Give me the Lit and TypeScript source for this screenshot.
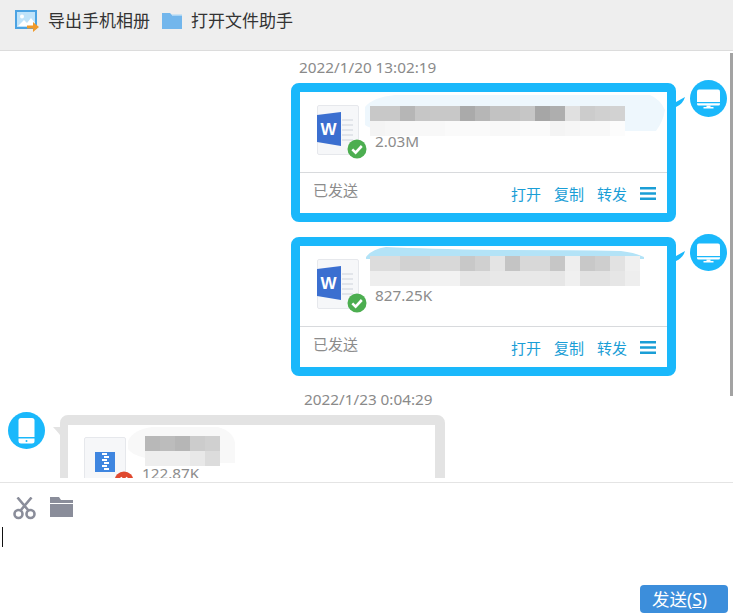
import { LitElement, html, css, svg, nothing } from "lit";
import { customElement } from "lit/decorators.js";

const wordIcon = svg`<svg class="doc" viewBox="0 0 42 50" width="42" height="50">
  <rect x=".5" y=".5" width="41" height="49" rx="1.5" fill="#f6f7f9" stroke="#e6e8ec"/>
  <path d="M25 15h11M25 20h11M25 25h11M25 30h11M25 35h11" stroke="#e2e5ea" stroke-width="2"/>
  <path d="M0 10 24 7v34L0 37z" fill="#3b6fd0"/>
  <text x="11.500" y="30" font-family="Liberation Sans, sans-serif" font-weight="700" font-size="17" fill="#fff" text-anchor="middle">W</text>
</svg>`;
const zipIcon = svg`<svg class="doc" viewBox="0 0 42 50" width="42" height="50">
  <rect x=".5" y=".5" width="41" height="60" rx="1.500" fill="#f6f7f9" stroke="#e6e8ec"/>
  <rect x="11" y="15" width="20" height="20" fill="#3f86e0"/>
  <path d="M18 16h5v2h-5zM20 19h5v2h-5zM18 22h5v2h-5zM20 25h5v2h-5zM18 28h5v2h-5zM20 31h5v2h-5z" fill="#fff"/>
</svg>`;
const checkBadge = svg`<svg class="badge" viewBox="0 0 20 20" width="20" height="20">
  <circle cx="10" cy="10" r="9.500" fill="#4cae50"/>
  <path d="M5.300 10.400 8.600 13.600 14.800 7" fill="none" stroke="#fff" stroke-width="2.600"/>
</svg>`;
const errorBadge = svg`<svg class="badge" viewBox="0 0 20 20" width="20" height="20">
  <circle cx="10" cy="10" r="9.500" fill="#e0492f"/>
  <path d="M6.500 6.500 13.500 13.500M13.500 6.500 6.500 13.500" stroke="#fff" stroke-width="2.400"/>
</svg>`;
const pcIcon = svg`<svg viewBox="0 0 37 37" width="37" height="37">
  <circle cx="18.500" cy="18.500" r="18.500" fill="#1ab8fb"/>
  <path d="M7 11.500q0-2 2-2h19q2 0 2 2V22H7z" fill="#fff"/>
  <path d="M7 23.300h23v.7q0 1.500-1.500 1.500h-20Q7 25.500 7 24z" fill="#fff"/>
  <path d="M16.500 25.500h4v1.500h3v1.500h-10V27h3z" fill="#fff"/>
</svg>`;
const phoneIcon = svg`<svg viewBox="0 0 37 37" width="37" height="37">
  <circle cx="18.500" cy="18.500" r="18.500" fill="#1ab8fb"/>
  <path d="M13 6h11q2.500 0 2.500 2.500V25h-16V8.500Q10.500 6 13 6z" fill="#fff"/>
  <path d="M10.500 26.500h16V29q0 2.500-2.500 2.500H13q-2.500 0-2.500-2.500z" fill="#fff"/>
  <circle cx="18.500" cy="29" r="1" fill="#1ab8fb"/>
</svg>`;

const m1 = [
  ["c8","c8","b6","c6","c8","c8","aa","b6","c2","c2","c6","a6","ae","e0","cc","d0","d2"],
  ["f4","f6","f8","f8","f8","fa","fa","fa","f8","f8","fa","fa","f4","f6","f8","f8","fc"],
];
const m2 = [
  ["dc","dc","d2","d2","d8","d8","c8","d0","e4","c4","d8","d8","c6","ee","c8","ce","e2","f0"],
  ["ee","ee","f0","f0","f2","f2","e6","e6","e8","e8","e8","e8","e6","f0","e2","e2","e6","ee"],
];
const m3 = [
  ["b8","bc","b6","cc","d0"],
  ["ee","ee","ee","e8","dc"],
];

function mosaic(rows: string[][], cls: string) {
  return html`<div class="mosaic ${cls}">
    ${rows.map(
      (r) => html`<div class="mrow">${r.map((c) => html`<i style="background:#${c}${c}${c}"></i>`)}</div>`
    )}
  </div>`;
}

@customElement("app-root")
export class AppRoot extends LitElement {
  static styles = css`
    :host {
      display: flex;
      flex-direction: column;
      width: 733px;
      height: 616px;
      overflow: hidden;
      background: #fff;
      font-family: "Noto Sans", "Noto Sans CJK SC", sans-serif;
      color: #333;
    }
    .toolbar {
      flex: none;
      box-sizing: border-box;
      background: #eeeeee;
      border-bottom: 1px solid #dcdcdc;
      height: 51px;
      display: flex;
      align-items: center;
      padding: 0 0 9px 15px;
      font-size: 17px;
      color: #333;
    }
    .toolbar svg { flex: none; }
    .toolbar span { line-height: 24px; }
    .t1 { margin: 0 12px 0 9px; }
    .t2 { margin-left: 9px; }
    .pane {
      flex: none;
      height: 427px;
      overflow: hidden;
      box-sizing: border-box;
      display: flex;
      flex-direction: column;
      position: relative;
    }
    .scrollbar {
      position: absolute;
      right: 0;
      top: 2px;
      width: 3px;
      height: 343px;
      background: #a3a3a3;
    }
    .time {
      font-size: 15.3px;
      line-height: 20px;
      color: #8a8a8a;
      white-space: nowrap;
    }
    .time.a { margin: 6px 0 6px 299px; }
    .time.b { margin: 13px 0 6px 304px; }
    .row { display: flex; flex: none; }
    .row.me { margin-left: 291px; }
    .row.me + .row.me { margin-top: 15px; }
    .row.other { margin-left: 8px; }
    .avatar { flex: none; height: 37px; margin-top: -3px; }
    .tail { flex: none; width: 14px; height: 24px; }
    .row.me .tail { margin-top: 9px; }
    .row.other .tail { width: 7px; margin-top: 12px; margin-left: 8px; }
    .bubble {
      flex: none;
      width: 385px;
      height: 139px;
      box-sizing: border-box;
      border: 9px solid #1ab8fb;
      border-radius: 8px;
      background: #fff;
      display: flex;
      flex-direction: column;
    }
    .bubble.grey { border-color: #e3e3e3; border-width: 10px 10px 9px 8px; }
    .file {
      flex: none;
      height: 81px;
      box-sizing: border-box;
      padding: 13px 0 0 17px;
      display: flex;
      gap: 16px;
      position: relative;
      border-bottom: 1px solid #d8dadd;
    }
    .grey .file { padding: 12px 0 0 16px; border-bottom: 0; }
    .icon { flex: none; position: relative; width: 42px; height: 50px; }
    .doc { display: block; }
    .badge { position: absolute; left: 30px; top: 34px; display: block; }
    .info { flex: none; position: relative; }
    .mosaic { position: absolute; left: -5px; top: 1px; }
    .mosaic.b { top: -3px; }
    .mosaic.c { top: -1px; left: 3px; }
    .mrow { display: flex; height: 15px; }
    .mrow i { display: block; width: 15px; height: 15px; }
    .size {
      font-size: 15.3px;
      line-height: 18px;
      color: #8c8c8c;
      margin-top: 27px;
    }
    .haze { position: absolute; display: block; }
    .h1 { left: 65px; top: 3px; }
    .h2 { left: 66px; top: 1px; }
    .h3 { left: 60px; top: 2px; }
    .foot {
      flex: 1;
      display: flex;
      align-items: center;
      padding: 0 11px 0 13px;
      font-size: 15px;
    }
    .status { color: #8c8c8c; line-height: 22px; margin-top: -6px; }
    .actions {
      margin-left: auto;
      display: flex;
      align-items: center;
      gap: 13px;
      color: #1a9ed6;
    }
    .menu { display: block; }
    .composer {
      flex: 1;
      border-top: 1px solid #e4e4e4;
      margin-top: 4px;
      display: flex;
      flex-direction: column;
    }
    .tools { display: flex; gap: 14px; padding: 14px 0 0 13px; height: 30px; flex: none; }
    .caret { width: 1px; height: 20px; background: #111; margin: 0 0 0 2px; flex: none; }
    .send-row { display: flex; justify-content: flex-end; padding: 38px 5px 0 0; }
    .send {
      width: 88px;
      height: 28px;
      box-sizing: border-box;
      border: 0;
      border-radius: 4px;
      background: #3c8edb;
      color: #fff;
      font: 17.500px/28px "Noto Sans", "Noto Sans CJK SC", sans-serif;
      padding: 0 9px 0 0;
      text-align: center;
    }
    .send u { text-decoration: underline; }
  `;

  private card(
    kind: "word" | "zip",
    rows: string[][],
    cls: string,
    size: string,
    haze: unknown,
    grey = false
  ) {
    return html`<div class="bubble ${grey ? "grey" : ""}">
      <div class="file">
        ${haze}
        <div class="icon">${kind === "word" ? wordIcon : zipIcon}${grey ? errorBadge : checkBadge}</div>
        <div class="info"><div class="size">${size}</div>${mosaic(rows, cls)}</div>
      </div>
      ${grey
        ? nothing
        : html`<div class="foot">
            <span class="status">已发送</span>
            <div class="actions">
              <span>打开</span><span>复制</span><span>转发</span>
              <svg class="menu" width="16" height="13" viewBox="0 0 16 13"><path d="M0 0h16v2.600H0zM0 5.200h16v2.600H0zM0 10.400h16V13H0z" fill="#1a9ed6"/></svg>
            </div>
          </div>`}
    </div>`;
  }

  render() {
    const haze1 = svg`<svg class="haze h1" width="301" height="40" viewBox="0 0 301 40"><path d="M0 12Q8 2 30 0H285Q295 4 300 15Q298 27 291 36H60Q10 38 0 30Z" fill="#eef7fd"/></svg>`;
    const haze2 = svg`<svg class="haze h2" width="278" height="12" viewBox="0 0 278 12"><path d="M0 10Q6 2 20 0Q60 2 130 3Q200 3 255 4Q270 6 278 10V12H0Z" fill="#b3e3f7"/></svg>`;
    const haze3 = svg`<svg class="haze h3" width="107" height="40" viewBox="0 0 107 40"><path d="M0 14Q6 2 24 0H90Q105 4 107 16V36H50Q6 32 0 22Z" fill="#f8f8f8"/></svg>`;
    const tail = svg`<svg class="tail" viewBox="0 0 14 24"><path d="M0 10 9 5Q7 12 0 15Z" fill="#1ab8fb"/></svg>`;
    return html`
      <div class="toolbar">
        <svg width="24" height="22" viewBox="0 0 24 22">
          <rect x="1" y="1" width="20" height="17" fill="#bfe3fa" stroke="#4ba3e3" stroke-width="2"/>
          <circle cx="7" cy="6.500" r="2" fill="#fff"/>
          <path d="M3 16 9 10l3 3 4-5 4 5v3z" fill="#fff"/>
          <path d="M12 15.500h6V12l6 5-6 5v-3.500h-6z" fill="#f09a2c"/>
        </svg>
        <span class="t1">导出手机相册</span>
        <svg width="20" height="16" viewBox="0 0 20 16">
          <path d="M0 0h8l3 3h9v13H0z" fill="#72b6ec"/>
          <path d="M8 0l3 3h9V1.500H9.500z" fill="#a9d5f5"/>
        </svg>
        <span class="t2">打开文件助手</span>
      </div>
      <div class="pane">
        <div class="time a">2022/1/20 13:02:19</div>
        <div class="row me">
          ${this.card("word", m1, "a", "2.03M", haze1)}
          ${tail}
          <div class="avatar">${pcIcon}</div>
        </div>
        <div class="row me">
          ${this.card("word", m2, "b", "827.25K", haze2)}
          ${tail}
          <div class="avatar">${pcIcon}</div>
        </div>
        <div class="time b">2022/1/23 0:04:29</div>
        <div class="row other">
          <div class="avatar">${phoneIcon}</div>
          <svg class="tail" viewBox="0 0 7 24"><path d="M7 0H0Q3 3 7 8Z" fill="#e3e3e3"/></svg>
          ${this.card("zip", m3, "c", "122.87K", haze3, true)}
        </div>
        <div class="scrollbar"></div>
      </div>
      <div class="composer">
        <div class="tools">
          <svg width="23" height="23" viewBox="0 0 23 23">
            <g fill="none" stroke="#8a8d9a" stroke-width="2.600">
              <circle cx="5.500" cy="17" r="4"/><circle cx="17.500" cy="17" r="4"/>
              <path d="M7.500 13.500 18.500 0.500M15.500 13.500 4.500 0.500"/>
            </g>
          </svg>
          <svg width="23" height="20" viewBox="0 0 23 20">
            <path d="M0 0h9l2 3h12v3H0z" fill="#8a8d9a"/>
            <path d="M0 7h23v13H0z" fill="#8a8d9a"/>
          </svg>
        </div>
        <div class="caret"></div>
        <div class="send-row"><button class="send">发送(<u>S</u>)</button></div>
      </div>
    `;
  }
}
